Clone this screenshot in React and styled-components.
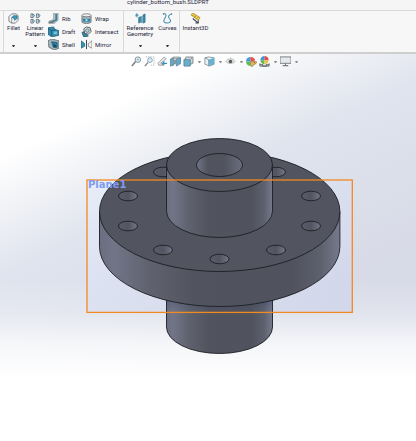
import styled, { createGlobalStyle } from "styled-components";

const GlobalStyle = createGlobalStyle`
  * {
    box-sizing: border-box;
  }

  body {
    margin: 0;
    font-family: Roboto, "Noto Sans", sans-serif;
    font-size: 6px;
    color: #24243a;
    background: #fff;
  }
`

const Page = styled.div`
  min-height: 100vh;
  display: flex;
  flex-direction: column;
  overflow: hidden;
`

const TitleBar = styled.header`
  height: 10px;
  padding-right: 80px;
  background: #f5f5f6;
  text-align: center;
  line-height: 4px;
`

const FileName = styled.h1`
  margin: 0;
  font-size: 6px;
  font-weight: 400;
`

const Ribbon = styled.nav`
  height: 44px;
  display: flex;
  padding-left: 3px;
  background: #f7f7f7;
  border-top: 1px solid #dadada;
  border-bottom: 2px solid #cfcfcf;
`

const Group = styled.div`
  display: flex;
  border-left: 1px solid #d9d9d9;
`

const Column = styled.div`
  width: ${({ $width }) => $width}px;
  padding-top: 1px;
`

const Tool = styled.button`
  border: 0;
  padding: 0;
  background: none;
  color: inherit;
  font: inherit;
  display: flex;
  align-items: center;
  cursor: pointer;
`

const BigTool = styled(Tool)`
  width: ${({ $width }) => $width}px;
  flex-direction: column;
  padding: 2px 0 5px;
  line-height: 6px;
  white-space: pre-line;
`

const SmallTool = styled(Tool)`
  height: 13px;
  gap: 3px;
  padding-left: 1px;
  white-space: nowrap;
`

const Icon = styled.svg`
  width: 11px;
  height: 11px;
  flex: none;
  fill: none;
  stroke-linejoin: round;
`

const Label = styled.span`
  margin-top: 1px;
`

const Arrow = styled.span`
  margin-top: auto;
  border: 1px solid transparent;
  border-top: 2px solid #333;
  border-bottom: 0;
  width: 3px;
`

const Viewport = styled.main`
  flex: 1;
  background:
    linear-gradient(180deg, rgba(255, 255, 255, 0) 58%, rgba(255, 255, 255, 0.25) 67%, rgba(255, 255, 255, 0.75) 75%, #fff 84%),
    linear-gradient(155deg, #fff 18%, #eff1f5 28%, #e0e4ee 38%, #d8dbe7 65%, #d5d9e8 100%);
`

const ViewBar = styled.div`
  height: 16px;
  display: flex;
  justify-content: center;
  padding-left: 14px;
`

const ViewTool = styled(Tool)`
  width: ${({ $arrow }) => ($arrow ? 8 : 13)}px;
  height: 15px;
  justify-content: center;
`

const ViewArrow = styled(Arrow)`
  margin: 0;
  border-top-color: #888;
`

const Model = styled.svg`
  display: block;
  width: 100%;
  height: auto;
`

const PlaneName = styled.text`
  font-family: "DejaVu Sans", sans-serif;
  font-size: 10px;
  font-weight: 700;
  fill: #7f9cf0;
`

const icons = {
  fillet: (
    <>
      <path d="M1 4 4 1h5l2 2v5L8 11H4L1 9Z" fill="#f4f4f4" stroke="#77797c" />
      <path d="M4 5 6 3l4 0v3L7 8V6Z" fill="#3a9cc0" stroke="#22637f" strokeWidth=".7" />
      <path d="M4 5v6" stroke="#77797c" strokeWidth=".8" />
    </>
  ),
  pattern: (
    <g stroke="#5c6b76" strokeWidth=".9">
      <path d="M1 1h2l2 1.500L3.500 5H1zM7 1h2l2 1.500L9.500 5H7z" fill="#e4eaed" />
      <path d="M1 7h2l2 1.500L3.500 11H1zM7 7h2l2 1.500L9.500 11H7z" fill="#e4eaed" />
      <path d="M3 1v3M9 1v3M3 7v3M9 7v3" stroke="#2b7594" />
    </g>
  ),
  rib: (
    <>
      <path d="M6 0h5v8L6 12H1V9l5-2Z" fill="#bfc3c6" stroke="#8d9194" strokeWidth=".7" />
      <path d="M8 1v6L3 9l3 1 4-2V1Z" fill="#37819e" />
      <path d="M1 9h5v2H1z" fill="#6f7c84" />
    </>
  ),
  draft: (
    <>
      <path d="M0 2l6-1 2 3 4 1v5l-8 2-4-3Z" fill="#3389ac" stroke="#205a75" strokeWidth=".8" />
      <path d="M0 3l4 2v6M4 5l5-1" stroke="#195068" strokeWidth=".8" />
      <path d="M6 6h4v3H6z" fill="#73bdd5" />
    </>
  ),
  shell: (
    <>
      <path d="M0 2l4-2 8 2v8l-5 2-6-3Z" fill="#9eb3bc" stroke="#666d72" strokeWidth=".9" />
      <path d="M4 3l6 1v5L6 9Z" fill="#2684aa" stroke="#1a4e66" strokeWidth=".8" />
      <path d="M6 5l3 2v2H6z" fill="#174a62" />
    </>
  ),
  wrap: (
    <>
      <path d="M1 3v7c2 2 8 2 10 0V3Z" fill="#a6b0b5" stroke="#62686d" strokeWidth=".8" />
      <ellipse cx="6" cy="2.500" rx="5" ry="1.700" fill="#eee" stroke="#62686d" strokeWidth=".8" />
      <path d="M2 6c2 1 6 1 8 0v3c-2 1-6 1-8 0Z" fill="#2387af" />
      <path d="M5 7h2v2H5z" fill="#d8eef5" />
    </>
  ),
  intersect: (
    <>
      <path d="M1 7l3-1 2 3 2 2-5 1Z" fill="#3187a8" stroke="#275061" strokeWidth=".8" />
      <path d="M3 3l3-2 4 1 1 4-3 3-4-1Z" fill="#e6eaec" stroke="#4b5358" />
      <circle cx="7" cy="5" r="2" fill="#b4d2de" stroke="#4b5358" strokeWidth=".7" />
    </>
  ),
  mirror: (
    <>
      <path d="M0 2l4 3v3l-4 2Z" fill="#3994b8" stroke="#22637f" strokeWidth=".8" />
      <path d="M12 2 8 5v3l4 2Z" fill="#f2f2f2" stroke="#777" strokeWidth=".8" />
      <path d="M6 1v10" stroke="#333b40" />
    </>
  ),
  reference: (
    <>
      <path d="M4 5l2-1v6l-2 1ZM9 2l2-1v9l-2 1Z" fill="#3792b5" stroke="#22637f" strokeWidth=".7" />
      <path d="M7 4l1-1v7l-1 1Z" fill="#8ec5d8" stroke="#3d88a5" strokeWidth=".7" />
      <path d="M2 0v5M0 2.500h4M1 1l2 3M3 1 1 4" stroke="#2a87ab" strokeWidth=".7" />
    </>
  ),
  curves: (
    <>
      <path d="M1 1c4-1 4 2 2 5s-1 5 3 5 4-3 2-5 0-5 3-5" stroke="#3b8caf" strokeWidth="1.100" />
      <path d="M1 1h1M10 1h1" stroke="#555" />
    </>
  ),
  instant: (
    <>
      <path d="M1 2l2-2 8 5-2 3Z" fill="#f4cc43" stroke="#8f762b" strokeWidth=".7" />
      <path d="M4 2 3 3M6 3 5 5M8 5 7 6" stroke="#7b6320" strokeWidth=".7" />
      <path d="M3 6l6 5M9 8v3H6" stroke="#33414b" strokeWidth="1.100" />
    </>
  ),
  zoomFit: (
    <>
      <circle cx="7.500" cy="4" r="3" fill="#edf7fc" stroke="#7b858c" />
      <path d="M5 6 1 11" stroke="#7b858c" strokeWidth="1.700" />
      <path d="M6 4h3M7.500 2.500v3" stroke="#68a9c8" strokeWidth=".7" />
    </>
  ),
  zoomArea: (
    <>
      <path d="M2 1h9v9H7" stroke="#9ca4a9" strokeWidth=".8" strokeDasharray="1.500 1" />
      <circle cx="6.500" cy="4.500" r="2.600" fill="#d8eef9" stroke="#8aa5b3" />
      <path d="M4.500 7 1 11" stroke="#7b858c" strokeWidth="1.500" />
    </>
  ),
  previous: (
    <>
      <path d="M1 8 8 1l2 2-6 5 3 2H2Z" fill="#ececec" stroke="#8b9298" strokeWidth=".9" />
      <path d="M11 8H6m2-2L6 8l2 2" stroke="#3a91b7" strokeWidth="1.200" />
    </>
  ),
  section: (
    <>
      <path d="M0 4l4-2v8l-4 1ZM7 3l5-1v6l-5 3Z" fill="#5daccc" stroke="#5f7c8b" strokeWidth=".8" />
      <path d="M0 4l3-2 4 1 5-1-2-1H4Z" fill="#bac3c8" stroke="#7a858c" strokeWidth=".6" />
      <path d="M4 4h3v5H4z" fill="#89989f" />
    </>
  ),
  orientation: (
    <>
      <path d="M3 4V1h8v7H8" fill="#f1f1f1" stroke="#8d9499" strokeWidth=".9" />
      <path d="M1 4h7v7H1z" fill="#69aecb" stroke="#477e98" strokeWidth=".8" />
      <path d="M1 4l3-2h6L8 4M10 2v6l-2 2" stroke="#7b8389" strokeWidth=".8" />
    </>
  ),
  display: (
    <>
      <path d="M1 2l4-1 6 1v7l-5 2-5-2Z" fill="#e9f2f6" stroke="#6f8089" strokeWidth=".8" />
      <path d="M5 4l6-2v7l-5 2Z" fill="#68b2d0" />
      <path d="M1 2l4 2v7" stroke="#6f8089" strokeWidth=".8" />
    </>
  ),
  eye: (
    <>
      <path d="M1 6c3-4 7-4 10 0-3 3-7 3-10 0Z" fill="#ececec" stroke="#a6a6a6" strokeWidth=".8" />
      <circle cx="6" cy="6" r="2" fill="#555b61" />
      <path d="M2 3l1 1M6 1.500V3M10 3 9 4" stroke="#bbb" strokeWidth=".7" />
    </>
  ),
  appearance: (
    <>
      <path d="M5 1a5 5 0 0 0-5 5h5Z" fill="#4597df" />
      <path d="M5 1a5 5 0 0 1 5 4L5 6Z" fill="#e84d42" />
      <path d="M0 6a5 5 0 0 0 5 5V6Z" fill="#64b959" />
      <path d="M5 6h6l1 1-6 5-1-3Z" fill="#e0b653" stroke="#77705c" strokeWidth=".6" />
      <path d="M8 6l2 2" stroke="#bb4636" />
    </>
  ),
  scene: (
    <>
      <path d="M6 0a4.500 4.500 0 0 0-4.500 4.500H6Z" fill="#3999dc" />
      <path d="M6 0a4.500 4.500 0 0 1 4.500 4.500H6Z" fill="#e94b42" />
      <path d="M1.500 4.500A4.500 4.500 0 0 0 6 9V4.500Z" fill="#64b959" />
      <path d="M10.500 4.500A4.500 4.500 0 0 1 6 9V4.500Z" fill="#efc14d" />
      <path d="M1 8v3h10V8M1 9.500h3m4 0h3M4 9v2M8 9v2M4 11h4" stroke="#555c61" />
    </>
  ),
  monitor: (
    <>
      <path d="M0 1h12v7H0z" fill="#e6e9eb" stroke="#737a80" />
      <path d="M6 8v2M3 10.500h6" stroke="#737a80" strokeWidth="1.100" />
    </>
  ),
}

const shapeTools = [
  [
    { name: "Rib", icon: "rib" },
    { name: "Draft", icon: "draft" },
    { name: "Shell", icon: "shell" },
  ],
  [
    { name: "Wrap", icon: "wrap" },
    { name: "Intersect", icon: "intersect" },
    { name: "Mirror", icon: "mirror" },
  ],
]

const viewTools = [
  { name: "Zoom to Fit", icon: "zoomFit" },
  { name: "Zoom to Area", icon: "zoomArea" },
  { name: "Previous View", icon: "previous" },
  { name: "Section View", icon: "section" },
  { name: "View Orientation", icon: "orientation", menu: true },
  { name: "Display Style", icon: "display", menu: true },
  { name: "Hide/Show Items", icon: "eye", menu: true },
  { name: "Edit Appearance", icon: "appearance" },
  { name: "Apply Scene", icon: "scene", menu: true },
  { name: "View Settings", icon: "monitor", menu: true },
]

const boltHoles = [
  [163, 172], [276, 172],
  [128, 196], [311, 196],
  [128, 226], [311, 226],
  [163, 250], [276, 250],
  [219.5, 259],
]

const Glyph = ({ name }) => (
  <Icon viewBox="0 0 12 12" aria-hidden="true">{icons[name]}</Icon>
)

const BigButton = ({ label, icon, width, menu }) => (
  <BigTool $width={width}>
    <Glyph name={icon} />
    <Label>{label}</Label>
    {menu && <Arrow />}
  </BigTool>
)

const Bush = () => (
  <Model viewBox="0 70 416 371" role="img" aria-label="Flanged bush">
    <defs>
      <linearGradient id="side">
        <stop offset="0" stopColor="#6b6e80" />
        <stop offset=".06" stopColor="#727587" />
        <stop offset=".2" stopColor="#60636f" />
        <stop offset=".4" stopColor="#51535e" />
        <stop offset=".8" stopColor="#50525d" />
        <stop offset=".92" stopColor="#5d606d" />
        <stop offset="1" stopColor="#777a8c" />
      </linearGradient>
      <linearGradient id="bore">
        <stop offset="0" stopColor="#717487" />
        <stop offset=".25" stopColor="#51535e" />
        <stop offset=".6" stopColor="#51535e" />
        <stop offset="1" stopColor="#6b6e7e" />
      </linearGradient>
      <linearGradient id="bolt">
        <stop offset="0" stopColor="#5a5c68" />
        <stop offset=".5" stopColor="#52545f" />
        <stop offset="1" stopColor="#747788" />
      </linearGradient>
      <linearGradient id="planeTint" x1="0" y1="0" x2="1" y2="1">
        <stop offset="0" stopColor="#e6ecfa" />
        <stop offset="1" stopColor="#cdd3ea" />
      </linearGradient>
      <linearGradient id="shade" x1="0" y1="0" x2="0" y2="1">
        <stop offset="0" stopColor="#36466e" stopOpacity=".45" />
        <stop offset="1" stopColor="#36466e" stopOpacity="0" />
      </linearGradient>
    </defs>

    <rect x="87" y="180" width="265" height="132" fill="url(#planeTint)" fillOpacity=".75" />

    <g stroke="#1d1e24" strokeWidth=".9">
      <path d="M166.500 290v37a53 26.500 0 0 0 106 0v-37Z" fill="url(#side)" />
      <path d="M167 297h105v15H167Z" fill="url(#shade)" stroke="none" />
      <path d="M99.500 211.500v35a120.200 60 0 0 0 240.400 0v-35Z" fill="url(#side)" />
      <ellipse cx="219.700" cy="211.500" rx="120.200" ry="60" fill="#52545f" />
      {boltHoles.map(([x, y]) => (
        <ellipse key={`${x}-${y}`} cx={x} cy={y} rx="9.500" ry="4.800" fill="url(#bolt)" />
      ))}
      <path d="M166.500 165v46a53 26.500 0 0 0 106 0v-46Z" fill="url(#side)" />
      <ellipse cx="219.500" cy="165" rx="53" ry="26.500" fill="#52545f" />
      <ellipse cx="219.500" cy="165" rx="23" ry="11.500" fill="url(#bore)" />
    </g>

    <rect x="87" y="180" width="265.300" height="132.400" fill="none" stroke="#f28a22" strokeWidth="1.300" />
    <PlaneName x="88" y="188">Plane1</PlaneName>
  </Model>
)

const App = () => {
  return (
    <Page>
      <GlobalStyle />
      <TitleBar>
        <FileName>cylinder_bottom_bush.SLDPRT</FileName>
      </TitleBar>

      <Ribbon>
        <Group>
          <BigButton label="Fillet" icon="fillet" width={19} menu />
          <BigButton label={"Linear\nPattern"} icon="pattern" width={24} menu />
          {shapeTools.map((tools, i) => (
            <Column key={i} $width={i === 0 ? 33 : 43}>
              {tools.map((tool) => (
                <SmallTool key={tool.name}>
                  <Glyph name={tool.icon} />
                  {tool.name}
                </SmallTool>
              ))}
            </Column>
          ))}
        </Group>
        <Group>
          <BigButton label={"Reference\nGeometry"} icon="reference" width={32} menu />
          <BigButton label="Curves" icon="curves" width={23} menu />
        </Group>
        <Group>
          <BigButton label="Instant3D" icon="instant" width={31} />
        </Group>
      </Ribbon>

      <Viewport>
        <ViewBar>
          {viewTools.map((tool) => [
            <ViewTool key={tool.name} aria-label={tool.name}>
              <Glyph name={tool.icon} />
            </ViewTool>,
            tool.menu && (
              <ViewTool key={`${tool.name} menu`} $arrow aria-label={`${tool.name} menu`}>
                <ViewArrow />
              </ViewTool>
            ),
          ])}
        </ViewBar>
        <Bush />
      </Viewport>
    </Page>
  )
}

export default App
